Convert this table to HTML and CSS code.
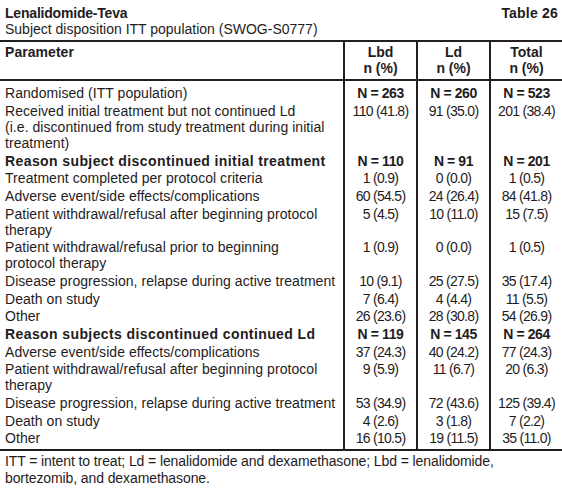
FILE: index.html
```html
<!DOCTYPE html>
<html lang="en">
<head>
<meta charset="utf-8">
<title>Lenalidomide-Teva – Table 26</title>
<link rel="stylesheet" href="styles.css">
</head>
<body>
<div class="sheet">
  <header class="caption">
    <div class="caption-top">
      <h1 class="title">Lenalidomide-Teva</h1>
      <span class="table-no">Table 26</span>
    </div>
    <p class="subtitle">Subject disposition ITT population (SWOG-S0777)</p>
  </header>
  <table class="data">
    <colgroup>
      <col class="c-param">
      <col class="c-num">
      <col class="c-num">
      <col class="c-num">
    </colgroup>
    <thead>
      <tr>
        <th class="param">Parameter</th>
        <th class="num">Lbd<br>n (%)</th>
        <th class="num">Ld<br>n (%)</th>
        <th class="num">Total<br>n (%)</th>
      </tr>
    </thead>
    <tbody>
      <tr class="first">
        <td class="param">Randomised (ITT population)</td>
        <td class="num strong">N = 263</td><td class="num strong">N = 260</td><td class="num strong">N = 523</td>
      </tr>
      <tr>
        <td class="param">Received initial treatment but not continued Ld<br>(i.e. discontinued from study treatment during initial<br>treatment)</td>
        <td class="num">110 (41.8)</td><td class="num">91 (35.0)</td><td class="num">201 (38.4)</td>
      </tr>
      <tr>
        <td class="param strong">Reason subject discontinued initial treatment</td>
        <td class="num strong">N = 110</td><td class="num strong">N = 91</td><td class="num strong">N = 201</td>
      </tr>
      <tr>
        <td class="param">Treatment completed per protocol criteria</td>
        <td class="num">1 (0.9)</td><td class="num">0 (0.0)</td><td class="num">1 (0.5)</td>
      </tr>
      <tr>
        <td class="param">Adverse event/side effects/complications</td>
        <td class="num">60 (54.5)</td><td class="num">24 (26.4)</td><td class="num">84 (41.8)</td>
      </tr>
      <tr>
        <td class="param">Patient withdrawal/refusal after beginning protocol<br>therapy</td>
        <td class="num">5 (4.5)</td><td class="num">10 (11.0)</td><td class="num">15 (7.5)</td>
      </tr>
      <tr>
        <td class="param">Patient withdrawal/refusal prior to beginning<br>protocol therapy</td>
        <td class="num">1 (0.9)</td><td class="num">0 (0.0)</td><td class="num">1 (0.5)</td>
      </tr>
      <tr>
        <td class="param">Disease progression, relapse during active treatment</td>
        <td class="num">10 (9.1)</td><td class="num">25 (27.5)</td><td class="num">35 (17.4)</td>
      </tr>
      <tr>
        <td class="param">Death on study</td>
        <td class="num">7 (6.4)</td><td class="num">4 (4.4)</td><td class="num">11 (5.5)</td>
      </tr>
      <tr>
        <td class="param">Other</td>
        <td class="num">26 (23.6)</td><td class="num">28 (30.8)</td><td class="num">54 (26.9)</td>
      </tr>
      <tr>
        <td class="param strong">Reason subjects discontinued continued Ld</td>
        <td class="num strong">N = 119</td><td class="num strong">N = 145</td><td class="num strong">N = 264</td>
      </tr>
      <tr>
        <td class="param">Adverse event/side effects/complications</td>
        <td class="num">37 (24.3)</td><td class="num">40 (24.2)</td><td class="num">77 (24.3)</td>
      </tr>
      <tr>
        <td class="param">Patient withdrawal/refusal after beginning protocol<br>therapy</td>
        <td class="num">9 (5.9)</td><td class="num">11 (6.7)</td><td class="num">20 (6.3)</td>
      </tr>
      <tr>
        <td class="param">Disease progression, relapse during active treatment</td>
        <td class="num">53 (34.9)</td><td class="num">72 (43.6)</td><td class="num">125 (39.4)</td>
      </tr>
      <tr>
        <td class="param">Death on study</td>
        <td class="num">4 (2.6)</td><td class="num">3 (1.8)</td><td class="num">7 (2.2)</td>
      </tr>
      <tr class="last">
        <td class="param">Other</td>
        <td class="num">16 (10.5)</td><td class="num">19 (11.5)</td><td class="num">35 (11.0)</td>
      </tr>
    </tbody>
  </table>
  <p class="foot">ITT = intent to treat; Ld = lenalidomide and dexamethasone; Lbd = lenalidomide,<br>bortezomib, and dexamethasone.</p>
</div>
</body>
</html>
```
FILE: styles.css
```css
body {
  margin: 0;
  background: #ffffff;
  color: #1f1c1d;
  font-family: "Liberation Sans", Arial, sans-serif;
  font-size: 14px;
}

.sheet {
  width: 562px;
}

.caption {
  padding: 5px 4px 0 5px;
}

.caption-top {
  display: flex;
  justify-content: space-between;
  align-items: baseline;
}

.title {
  margin: 0;
  font-size: 14px;
  font-weight: bold;
  line-height: 16px;
  letter-spacing: -0.2px;
}

.table-no {
  font-weight: bold;
  line-height: 16px;
  letter-spacing: 0.2px;
}

.subtitle {
  margin: 0;
  line-height: 16px;
}

.data {
  margin-top: 3px;
  width: 562px;
  table-layout: fixed;
  border-collapse: separate;
  border-spacing: 0;
  border-top: 2px solid #231f20;
  border-bottom: 2px solid #231f20;
}

.c-param {
  width: 343px;
}

.c-num {
  width: 73px;
}

.data th,
.data td {
  padding: 0;
  vertical-align: top;
  white-space: nowrap;
}

.data .param {
  padding-left: 5px;
  text-align: left;
  letter-spacing: 0.05px;
}

.data .param.strong {
  letter-spacing: 0.4px;
}

.num {
  text-align: center;
  border-left: 2px solid #231f20;
  letter-spacing: -0.7px;
}

.num.strong {
  letter-spacing: -0.4px;
}

.data thead th {
  font-weight: bold;
  line-height: 16px;
  padding-top: 2.2px;
  padding-bottom: 2.8px;
  border-bottom: 2px solid #231f20;
}

.data thead th.num {
  letter-spacing: 0;
}

.data tbody td {
  line-height: 16px;
  padding-top: 0.85px;
  padding-bottom: 0.85px;
}

.data tbody tr.first td {
  padding-top: 4.2px;
}

.data tbody tr.last td {
  padding-bottom: 2.5px;
}

.strong {
  font-weight: bold;
}

.foot {
  margin: 2.2px 0 0;
  padding-left: 5px;
  line-height: 17px;
  letter-spacing: -0.1px;
  white-space: nowrap;
}
```
